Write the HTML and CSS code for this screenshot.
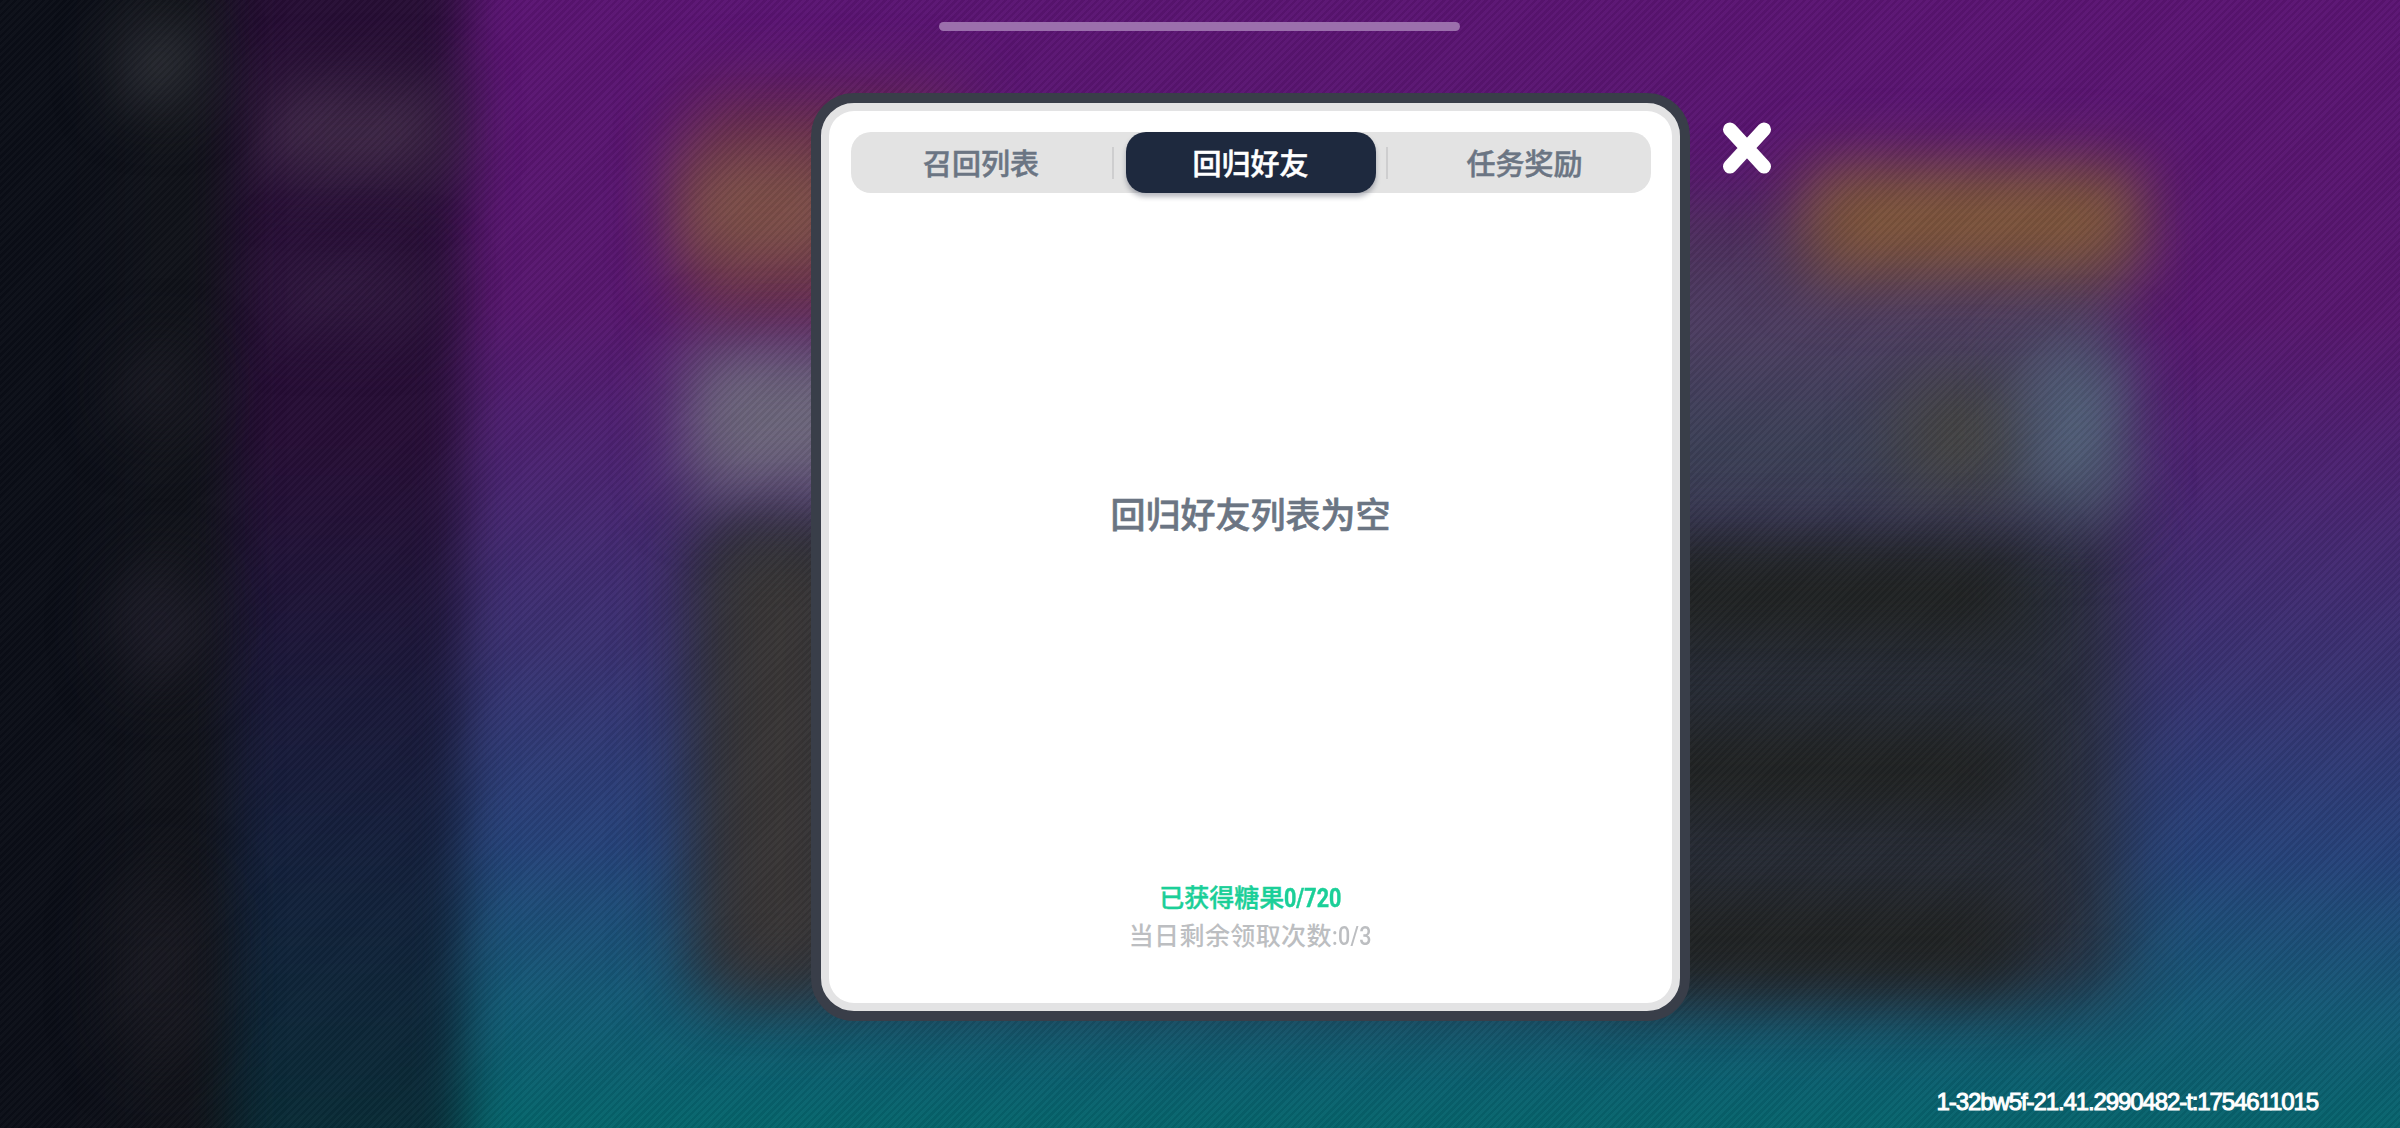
FILE: index.html
```html
<!DOCTYPE html>
<html lang="zh-CN">
<head>
  <meta charset="UTF-8" />
  <meta name="viewport" content="width=device-width, initial-scale=1.0" />
  <title>回归好友</title>
  <link rel="stylesheet" href="styles.css">
</head>
<body>
  <!-- blurred page behind the dialog -->
  <div class="backdrop">
    <div class="scene">
      <div class="blob list"></div>
      <div class="blob warm"></div>
      <div class="blob avatar"></div>
      <div class="blob silver"></div>
      <div class="blob header"></div>
      <div class="blob button"></div>
      <div class="blob olive"></div>
      <div class="blob sky"></div>
      <div class="blob row row-1"></div>
      <div class="blob row row-2"></div>
      <div class="blob row row-3"></div>
      <div class="blob brown"></div>
      <div class="blob submenu"></div>
      <div class="blob submenu-title"></div>
      <div class="blob submenu-item"></div>
      <div class="blob sidebar"></div>
      <div class="blob nav nav-1"></div>
      <div class="blob nav nav-2"></div>
      <div class="blob nav nav-3"></div>
      <div class="blob nav nav-4"></div>
    </div>
    <div class="stripes"></div>
  </div>

  <div class="screen">
    <div class="handle"></div>
    <div class="dialog-row">
      <div class="dialog">
        <div class="tabs">
          <button class="tab">召回列表</button>
          <span class="divider"></span>
          <button class="tab active">回归好友</button>
          <span class="divider"></span>
          <button class="tab last">任务奖励</button>
        </div>
        <div class="empty">回归好友列表为空</div>
        <div class="summary">
          <p class="candy">已获得糖果<span class="num">0/720</span></p>
          <p class="remain">当日剩余领取次数<span class="num">:0/3</span></p>
        </div>
      </div>
      <button class="close" aria-label="关闭">
        <svg width="48" height="52" viewBox="0 0 48 52">
          <path d="M7 7.500L41 44.500M41 7.500L7 44.500" stroke="#fff" stroke-width="14" stroke-linecap="round" fill="none" />
        </svg>
      </button>
    </div>
    <div class="version">1-32bw5f-21.41.2990482-t:1754611015</div>
  </div>
</body>
</html>
```

FILE: styles.css
```css
* {
  box-sizing: border-box;
}
body {
  margin: 0;
  height: 1128px;
  overflow: hidden;
  position: relative;
  font-family: "Noto Sans CJK SC", sans-serif;
}
button {
  border: none;
  padding: 0;
  background: none;
  font-family: inherit;
}

/* backdrop */
.backdrop, .scene, .stripes {
  position: absolute;
  inset: 0;
  overflow: hidden;
}
.scene {
  background: linear-gradient(180.5deg, #5b1473 0%, #58176f 28%, #4b2472 42%, #3a3272 58%, #26437a 75%, #145a76 88%, #04666b 100%);
}
.stripes {
  background: repeating-linear-gradient(135deg, rgba(0,0,0,0.06) 0 2.500px, rgba(255,255,255,0.02) 2.500px 5px);
}
.blob {
  position: absolute;
  filter: blur(32px);
}
.list { left: 695px; top: 510px; width: 1425px; height: 490px; background: #282d39; }
.list { filter: blur(38px); }
.warm { left: 690px; top: 90px; width: 270px; height: 240px; background: #65294f; }
.avatar { left: 680px; top: 150px; width: 180px; height: 120px; background: #7d5048; }
.silver { left: 685px; top: 345px; width: 240px; height: 150px; background: #6c667b; }
.header { left: 1600px; top: 200px; width: 520px; height: 330px; background: linear-gradient(#4d2b5a, #4e3f63 40%, #3c4058 70%, #3a3f52); }
.button { left: 1805px; top: 165px; width: 335px; height: 110px; background: #7f573a; }
.olive { left: 1900px; top: 380px; width: 120px; height: 110px; background: #454443; }
.sky { left: 2030px; top: 350px; width: 90px; height: 150px; background: #53617b; }
.row { left: 1600px; width: 420px; height: 90px; background: #202221; }
.row-1 { top: 550px; }
.row-2 { top: 725px; }
.row-3 { top: 895px; }
.brown { left: 715px; top: 540px; width: 130px; height: 440px; background: #393636; }
.submenu { left: 200px; top: -60px; width: 265px; height: 1260px; background: linear-gradient(#270e35, #270e36 40%, #1c1739 57%, #14203c 72%, #0d2738 87%, #063036); }
.submenu { filter: blur(24px); }
.submenu-title { left: 260px; top: 90px; width: 190px; height: 85px; background: #402a48; }
.submenu-item { left: 265px; top: 265px; width: 160px; height: 55px; background: #341c43; }
.sidebar { left: -80px; top: -80px; width: 315px; height: 1290px; background: linear-gradient(90deg, #0b0e17 50%, #11131a 80%, #0f1118); }
.sidebar { filter: blur(22px); }
.nav { left: 120px; width: 80px; height: 80px; border-radius: 40px; background: #1c1b26; }
.nav-1 { top: 25px; background: #34363d; }
.nav-2 { top: 350px; }
.nav-3 { top: 570px; height: 110px; background: #201e2c; }
.nav-4 { top: 880px; height: 180px; background: #191922; }

/* foreground */
.screen {
  position: relative;
  height: 1128px;
  display: flex;
  flex-direction: column;
}
.handle {
  width: 521px;
  height: 9px;
  margin: 22px 0 0 939px;
  border-radius: 5px;
  background: #9b6fac;
}
.dialog-row {
  display: flex;
  align-items: flex-start;
  margin: 62px 0 0 811px;
}
.dialog {
  width: 879px;
  height: 928px;
  padding: 29px 30px 58px 30px;
  display: flex;
  flex-direction: column;
  align-items: center;
  border: 10px solid #393e49;
  border-radius: 43px;
  background: #fff;
  box-shadow: inset 0 0 0 8px #e3e3e4;
}
.tabs {
  display: flex;
  align-items: center;
  width: 800px;
  height: 61px;
  flex: none;
  border-radius: 20px;
  background: #e3e3e3;
}
.tab {
  width: 261px;
  height: 61px;
  font-size: 29px;
  font-weight: 500;
  line-height: 59px;
  color: #6b7583;
  -webkit-text-stroke: 0.500px;
}
.tab.active {
  width: 250px;
  margin: 0 10px 0 12px;
  border-radius: 20px;
  color: #fff;
  background: #1e293e;
  box-shadow: 0 4px 5px rgba(20,25,50,0.3);
}
.tab.last {
  padding-left: 13px;
}
.divider {
  width: 2px;
  height: 32px;
  background: #cececf;
}
.empty {
  margin-top: 294px;
  font-size: 35px;
  font-weight: 500;
  line-height: 52px;
  color: #6b7583;
  -webkit-text-stroke: 0.600px;
}
.summary {
  margin-top: auto;
  text-align: center;
  font-size: 25px;
  font-weight: 500;
}
.summary p {
  margin: 0;
  height: 38px;
  line-height: 38px;
}
/* condensed digits */
.num {
  display: inline-block;
  font-family: Roboto, sans-serif;
  line-height: 1;
  transform: scaleX(0.86);
  transform-origin: left;
  margin-right: -9px;
}
.candy {
  color: #1bcf98;
  -webkit-text-stroke: 0.400px;
}
.candy .num {
  font-weight: bold;
}
.remain {
  letter-spacing: 0.400px;
  color: #bcbec1;
}
.remain .num {
  margin-right: -6px;
}
.close {
  width: 48px;
  height: 52px;
  margin: 29px 0 0 33px;
}
.close svg {
  display: block;
}
.version {
  margin: auto 82px 12px auto;
  font-family: "Liberation Sans", Arial, sans-serif;
  font-size: 24px;
  line-height: 28px;
  letter-spacing: -1.100px;
  color: #fff;
  -webkit-text-stroke: 1px #fff;
  white-space: nowrap;
}
```
